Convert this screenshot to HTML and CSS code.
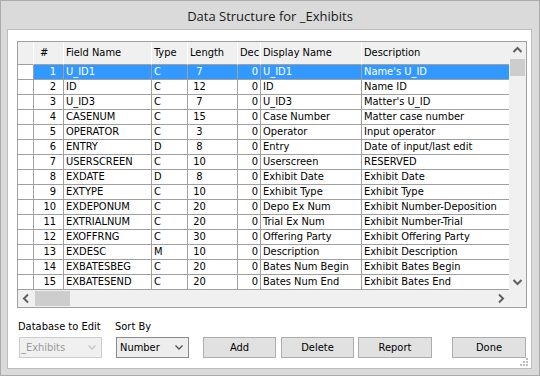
FILE: index.html
```html
<!DOCTYPE html>
<html>
<head>
<meta charset="utf-8">
<link rel="stylesheet" href="styles.css">
</head>
<body>
<div class="window">
  <div class="titlebar">Data Structure for _Exhibits</div>
  <div class="client">
    <div class="gridbox">
      <div class="gridmain">
        <div class="grid">
          <div class="row head">
            <div class="c rh"></div><div class="c num hnum">#</div><div class="c">Field Name</div><div class="c">Type</div><div class="c">Length</div><div class="c">Dec</div><div class="c">Display Name</div><div class="c last">Description</div>
          </div>
          <div class="row sel"><div class="c rh"></div><div class="c num">1</div><div class="c">U_ID1</div><div class="c">C</div><div class="c len">  7</div><div class="c dec">0</div><div class="c">U_ID1</div><div class="c last">Name's U_ID</div></div>
          <div class="row"><div class="c rh"></div><div class="c num">2</div><div class="c">ID</div><div class="c">C</div><div class="c len"> 12</div><div class="c dec">0</div><div class="c">ID</div><div class="c last">Name ID</div></div>
          <div class="row"><div class="c rh"></div><div class="c num">3</div><div class="c">U_ID3</div><div class="c">C</div><div class="c len">  7</div><div class="c dec">0</div><div class="c">U_ID3</div><div class="c last">Matter's U_ID</div></div>
          <div class="row"><div class="c rh"></div><div class="c num">4</div><div class="c">CASENUM</div><div class="c">C</div><div class="c len"> 15</div><div class="c dec">0</div><div class="c">Case Number</div><div class="c last">Matter case number</div></div>
          <div class="row"><div class="c rh"></div><div class="c num">5</div><div class="c">OPERATOR</div><div class="c">C</div><div class="c len">  3</div><div class="c dec">0</div><div class="c">Operator</div><div class="c last">Input operator</div></div>
          <div class="row"><div class="c rh"></div><div class="c num">6</div><div class="c">ENTRY</div><div class="c">D</div><div class="c len">  8</div><div class="c dec">0</div><div class="c">Entry</div><div class="c last">Date of input/last edit</div></div>
          <div class="row"><div class="c rh"></div><div class="c num">7</div><div class="c">USERSCREEN</div><div class="c">C</div><div class="c len"> 10</div><div class="c dec">0</div><div class="c">Userscreen</div><div class="c last">RESERVED</div></div>
          <div class="row"><div class="c rh"></div><div class="c num">8</div><div class="c">EXDATE</div><div class="c">D</div><div class="c len">  8</div><div class="c dec">0</div><div class="c">Exhibit Date</div><div class="c last">Exhibit Date</div></div>
          <div class="row"><div class="c rh"></div><div class="c num">9</div><div class="c">EXTYPE</div><div class="c">C</div><div class="c len"> 10</div><div class="c dec">0</div><div class="c">Exhibit Type</div><div class="c last">Exhibit Type</div></div>
          <div class="row"><div class="c rh"></div><div class="c num">10</div><div class="c">EXDEPONUM</div><div class="c">C</div><div class="c len"> 20</div><div class="c dec">0</div><div class="c">Depo Ex Num</div><div class="c last">Exhibit Number-Deposition</div></div>
          <div class="row"><div class="c rh"></div><div class="c num">11</div><div class="c">EXTRIALNUM</div><div class="c">C</div><div class="c len"> 20</div><div class="c dec">0</div><div class="c">Trial Ex Num</div><div class="c last">Exhibit Number-Trial</div></div>
          <div class="row"><div class="c rh"></div><div class="c num">12</div><div class="c">EXOFFRNG</div><div class="c">C</div><div class="c len"> 30</div><div class="c dec">0</div><div class="c">Offering Party</div><div class="c last">Exhibit Offering Party</div></div>
          <div class="row"><div class="c rh"></div><div class="c num">13</div><div class="c">EXDESC</div><div class="c">M</div><div class="c len"> 10</div><div class="c dec">0</div><div class="c">Description</div><div class="c last">Exhibit Description</div></div>
          <div class="row"><div class="c rh"></div><div class="c num">14</div><div class="c">EXBATESBEG</div><div class="c">C</div><div class="c len"> 20</div><div class="c dec">0</div><div class="c">Bates Num Begin</div><div class="c last">Exhibit Bates Begin</div></div>
          <div class="row"><div class="c rh"></div><div class="c num">15</div><div class="c">EXBATESEND</div><div class="c">C</div><div class="c len"> 20</div><div class="c dec">0</div><div class="c">Bates Num End</div><div class="c last">Exhibit Bates End</div></div>
        </div>
        <div class="vscroll">
          <div class="sbtn"><svg width="17" height="17" viewBox="0 0 17 17"><path d="M4.5 10 L8.5 6 L12.5 10" fill="none" stroke="#606060" stroke-width="2"/></svg></div>
          <div class="vtrack"><div class="vthumb"></div></div>
          <div class="sbtn"><svg width="17" height="17" viewBox="0 0 17 17"><path d="M4.5 7 L8.5 11 L12.5 7" fill="none" stroke="#606060" stroke-width="2"/></svg></div>
        </div>
      </div>
      <div class="hscroll">
        <div class="sbtn"><svg width="17" height="17" viewBox="0 0 17 17"><path d="M10 4.5 L6 8.5 L10 12.5" fill="none" stroke="#606060" stroke-width="2"/></svg></div>
        <div class="htrack"><div class="hthumb"></div></div>
        <div class="sbtn"><svg width="17" height="17" viewBox="0 0 17 17"><path d="M7 4.5 L11 8.5 L7 12.5" fill="none" stroke="#606060" stroke-width="2"/></svg></div>
        <div class="corner"></div>
      </div>
    </div>
    <div class="controls">
      <div class="group g1">
        <div class="lbl">Database to Edit</div>
        <div class="combo disabled w83"><span>_Exhibits</span><svg width="8" height="5" viewBox="0 0 8 5"><path d="M0.5 0.5 L4 4 L7.5 0.5" fill="none" stroke="#c4c4c4" stroke-width="1.3"/></svg></div>
      </div>
      <div class="group g2">
        <div class="lbl">Sort By</div>
        <div class="combo w73"><span>Number</span><svg width="8" height="5" viewBox="0 0 8 5"><path d="M0.5 0.5 L4 4 L7.5 0.5" fill="none" stroke="#505050" stroke-width="1.3"/></svg></div>
      </div>
      <div class="btn b-add">Add</div>
      <div class="btn b-del">Delete</div>
      <div class="btn b-rep">Report</div>
      <div class="btn b-done">Done</div>
    </div>
    <svg class="grip" width="9" height="9" viewBox="0 0 9 9">
      <rect x="6" y="0" width="2" height="2" fill="#bdbdbd"/>
      <rect x="3" y="3" width="2" height="2" fill="#bdbdbd"/>
      <rect x="6" y="3" width="2" height="2" fill="#bdbdbd"/>
      <rect x="0" y="6" width="2" height="2" fill="#bdbdbd"/>
      <rect x="3" y="6" width="2" height="2" fill="#bdbdbd"/>
      <rect x="6" y="6" width="2" height="2" fill="#bdbdbd"/>
    </svg>
  </div>
</div>
</body>
</html>
```

FILE: styles.css
```css
* { box-sizing: border-box; }
html, body { margin: 0; padding: 0; }
body {
  width: 540px;
  height: 376px;
  overflow: hidden;
  font-family: "DejaVu Sans Condensed", "DejaVu Sans", sans-serif;
  font-size: 11px;
  color: #000;
}
.window {
  width: 540px;
  height: 376px;
  background: #dadada;
  border: 1px solid #ababab;
  display: flex;
  flex-direction: column;
}
.titlebar {
  height: 28px;
  line-height: 28px;
  text-align: center;
  font-family: "Open Sans", "Noto Sans", sans-serif;
  font-size: 13px;
  color: #1a1a1a;
  padding-top: 1px;
}
.client {
  position: relative;
  height: 340px;
  margin: 0 7px 0 6px;
  border: 1px solid #bdbdbd;
  background: #fff;
  padding: 11px 0 0 9px;
}
.gridbox {
  width: 510px;
  height: 267px;
  border: 1px solid #a0a0a0;
  display: flex;
  flex-direction: column;
}
.gridmain {
  display: flex;
  height: 248px;
}
.grid {
  width: 491px;
  overflow: hidden;
}
.row {
  display: grid;
  grid-template-columns: 16px 30px 88px 36px 50px 23px 101px 147px;
  height: 15px;
}
.c {
  border-right: 1px solid #a0a0a0;
  border-bottom: 1px solid #a0a0a0;
  padding: 0 2px;
  line-height: 14px;
  white-space: pre;
  overflow: hidden;
  background: #fff;
}
.c.last { border-right: none; }
.c.num { text-align: right; padding-right: 7px; }
.c.dec { text-align: right; padding-right: 2px; }
.row.head { height: 23px; }
.row.head .c {
  background: #f0f0f0;
  line-height: 22px;
  border-right-color: #ffffff;
}
.row.head .c.hnum { text-align: left; padding-left: 6px; }
.row.sel .c { background: #3399ff; color: #fff; }
.row.sel .c.rh { background: #fff; }
.vscroll {
  width: 17px;
  background: #f0f0f0;
  display: flex;
  flex-direction: column;
}
.sbtn { width: 17px; height: 17px; flex: none; }
.sbtn svg { display: block; }
.vtrack { flex: 1; }
.vthumb {
  height: 17px;
  margin: 0 1px;
  background: #cdcdcd;
}
.hscroll {
  height: 17px;
  background: #f0f0f0;
  display: flex;
}
.htrack { flex: 1; }
.hthumb {
  width: 35px;
  height: 15px;
  margin: 1px 0;
  background: #cdcdcd;
}
.corner { width: 17px; height: 17px; }
.controls {
  display: flex;
  align-items: flex-end;
  margin: 12px 0 0 2px;
}
.group { display: flex; flex-direction: column; }
.g2 { margin-left: 14px; }
.lbl {
  line-height: 13px;
  height: 13px;
  margin: 0 0 4px -1px;
  white-space: nowrap;
}
.combo {
  height: 21px;
  border: 1px solid #8a8a8a;
  background: #ededed;
  display: flex;
  align-items: center;
  justify-content: space-between;
  padding: 0 5px 0 3px;
}
.combo.disabled {
  border-color: #cccccc;
  background: #f0f0f0;
  color: #9a9a9a;
  padding-left: 1px;
}
.w83 { width: 83px; }
.w73 { width: 73px; }
.btn {
  height: 21px;
  border: 1px solid #adadad;
  background: #e1e1e1;
  text-align: center;
  line-height: 19px;
  width: 73px;
}
.b-add { margin-left: 14px; }
.b-del { margin-left: 5px; }
.b-rep { margin-left: 4px; width: 74px; }
.b-done { margin-left: 20px; width: 74px; }
.grip {
  position: absolute;
  right: 2px;
  bottom: 1px;
}
```
